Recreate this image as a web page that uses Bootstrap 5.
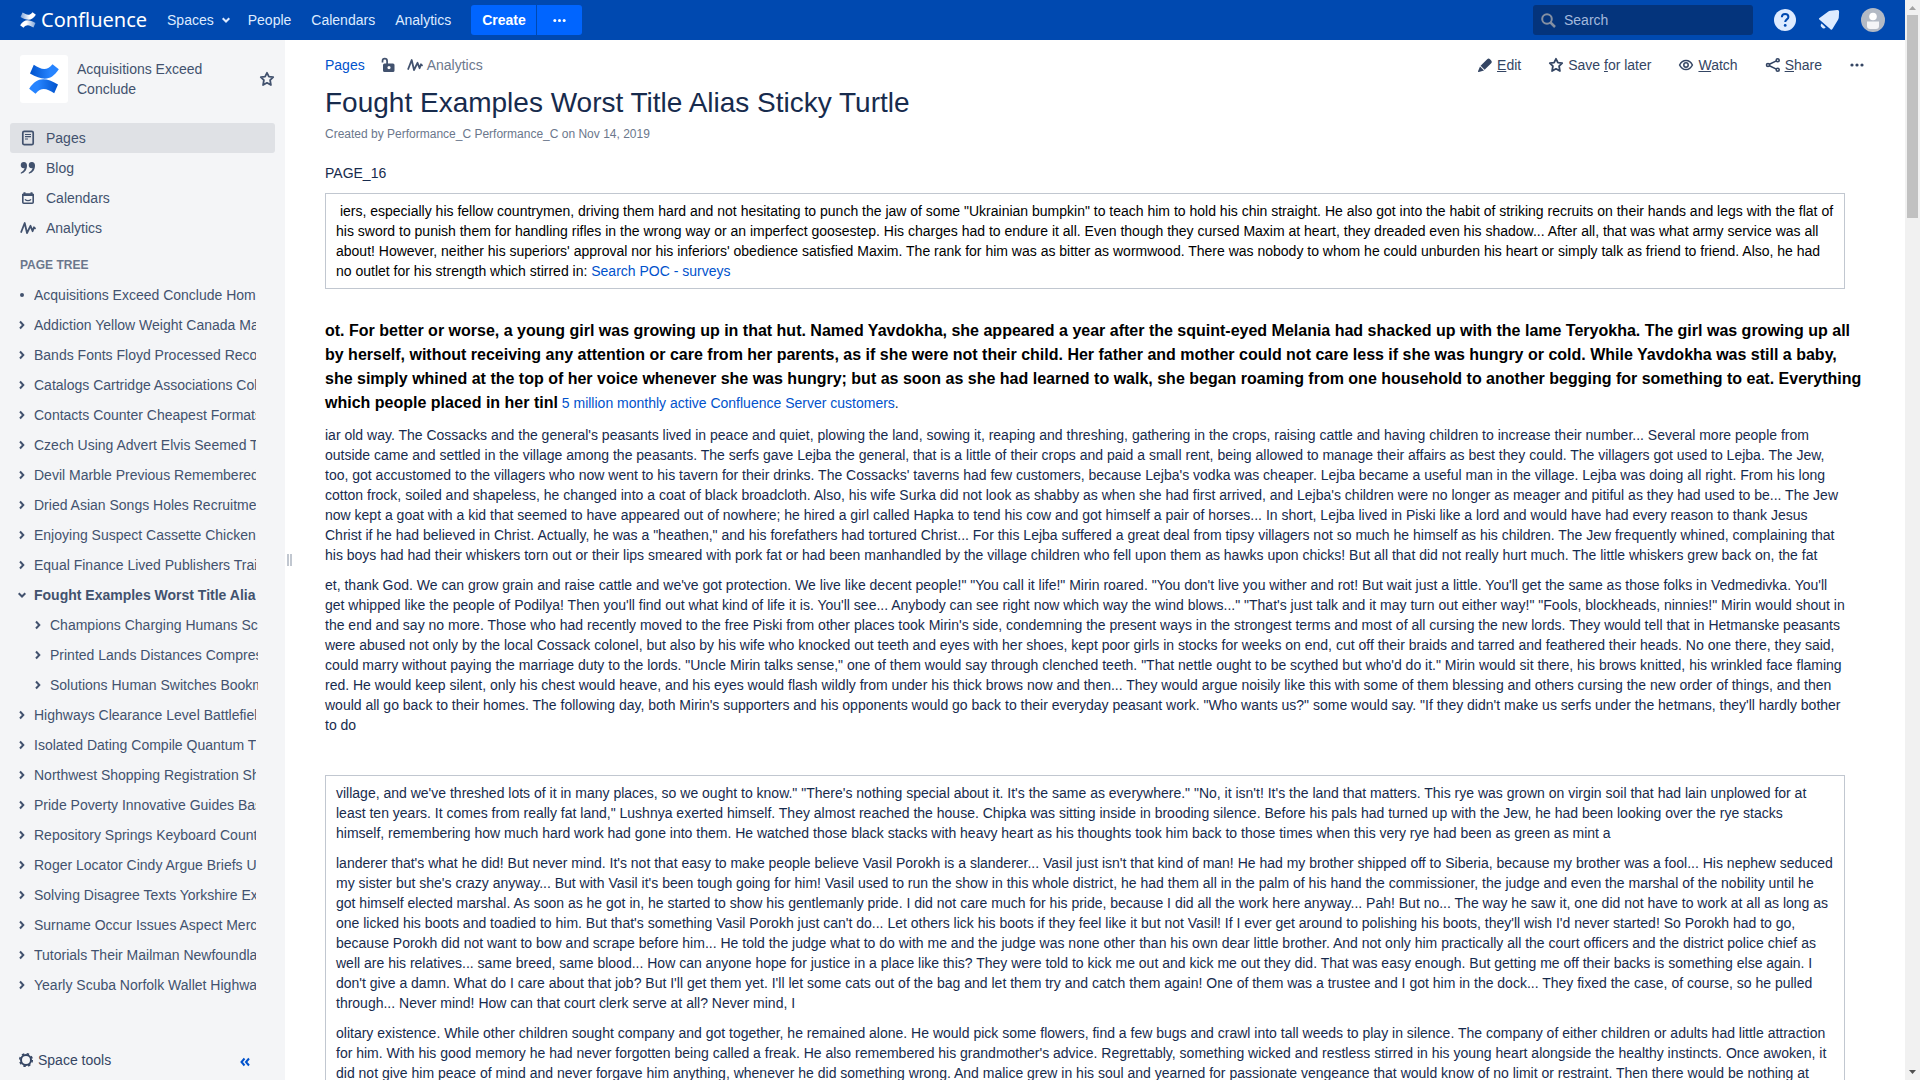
<!DOCTYPE html>
<html lang="en">
<head>
<meta charset="utf-8">
<meta name="viewport" content="width=device-width, initial-scale=1">
<title>Fought Examples Worst Title Alias Sticky Turtle - Confluence</title>
<link href="https://cdn.jsdelivr.net/npm/bootstrap@5.3.0/dist/css/bootstrap.min.css" rel="stylesheet">
<style>
body{font-family:"Liberation Sans",Arial,sans-serif;font-size:14px;line-height:20px;color:#172b4d;background:#fff}
a{color:#0052cc;text-decoration:none}
svg{display:block;flex:none}
.topbar{height:40px;background:#0049b0;padding:0 20px;color:#deebff}
.topbar .nav{gap:20px}
.topbar .nav-link{color:#deebff;padding:0;line-height:20px}
.drop-link{gap:8px;margin-right:-2px}
.brand-link{gap:5px;margin-right:20px}
.brand-name{font-family:"Noto Sans",sans-serif;font-size:20px;line-height:28px;color:#fff}
.btn-create{background:#0065ff;color:#fff;border:0;border-radius:3px;height:30px;font-size:14px;line-height:20px;padding:0 11px;font-weight:700}
.btn-create:hover{background:#2684ff;color:#fff}
.btn-more{border-left:1px solid #0049b0;padding:0 15px}
.search-box{width:220px;height:30px;background:#04347c;border-radius:3px;padding:0 8px}
.search-box input{background:transparent;border:0;outline:0;color:#deebff;font-size:14px;line-height:20px;min-width:0}
.search-box input::placeholder{color:#a3b9dc;opacity:1}
.user-tools{gap:20px;margin-left:20px}
.icon-btn{background:none;border:0;padding:0;color:inherit}
.space-side{width:285px;background:#f4f5f7;color:#42526e}
.space-side a{color:#42526e}
.space-head{padding:15px 10px 20px 20px}
.space-name{margin-left:9px}
.space-logo{width:48px;height:48px;background:#fff;border-radius:3px}
.side-nav{padding:0 10px}
.side-link{height:30px;border-radius:3px;padding:0 10px;gap:10px}
.side-link.current{background:#dfe1e5}
.tree-wrap{padding:12px 0 0 18px}
.tree-head{font-size:12px;line-height:20px;font-weight:700;color:#6b778c;margin:0 0 5px 2px}
.tree a{height:30px;gap:8px}
.tree span{overflow:hidden;white-space:nowrap;width:222px}
.tree ul{padding-left:16px}
.tree ul span{width:208px}
.side-foot{padding:0 35px 10px 18px;color:#344563}
.grip{width:5px;height:12px;border:solid #c1c7d0;border-width:0 2px;left:287px;top:514px}
.wiki-main{padding:15px 60px 0 40px}
.crumb-muted{color:#6b778c;gap:4px}
.page-title{font-size:28px;line-height:32px;font-weight:400;color:#172b4d;margin:12px 0 5px}
.byline{font-size:12px;line-height:20px;color:#6b778c;margin:0 0 19px}
.action-bar{margin:-5px -30px -5px 0;gap:7px}
.action-bar button{background:none;border:0;padding:0 10px;height:30px;color:#344563;gap:4px}
.wiki-body p{margin:0 0 10px}
.wiki-cell{border:1px solid #c1c7d0;padding:7px 10px}
.wiki-cell p:last-child{margin:0}
.before-box{margin-top:40px}
.wiki-body .big-text{line-height:24px;margin:30px -20px 10px 0}
.big-text strong{font-size:16px;color:#000}
.scroll-rail{width:15px;background:#f1f1f1;padding:5px 0}
.scroll-thumb{width:11px;height:19%;background:#c1c1c1;margin-top:4px}
</style>
</head>
<body class="d-flex vh-100 overflow-hidden">
<svg class="d-none" aria-hidden="true">
<symbol id="chev" viewBox="0 0 8 10"><path d="M2 1.500 5.300 5 2 8.500" fill="none" stroke="currentColor" stroke-width="2"/></symbol>
<symbol id="chev-down" viewBox="0 0 8 8"><path d="M.700 2.200 4 5.500l3.300-3.300" fill="none" stroke="currentColor" stroke-width="2"/></symbol>
<symbol id="pulse" viewBox="0 0 16 16"><path d="M1.200 12 4.700 3l2.300 10 3.500-7.200 2.100 5.400L14 7.300l1 1" fill="none" stroke="currentColor" stroke-width="1.800" stroke-linejoin="round" stroke-linecap="round"/></symbol>
<symbol id="star" viewBox="0 0 16 16"><path d="M8 1.800 9.900 5.700l4.300.5-3.100 3 .8 4.800L8 11.800l-3.900 2.200.8-4.800-3.100-3 4.300-.5z" fill="none" stroke="currentColor" stroke-width="1.800" stroke-linejoin="round"/></symbol>
<symbol id="dots" viewBox="0 0 16 16"><g fill="currentColor"><circle cx="3" cy="8" r="1.600"/><circle cx="8" cy="8" r="1.600"/><circle cx="13" cy="8" r="1.600"/></g></symbol>
</svg>
<div class="d-flex flex-column flex-grow-1 overflow-hidden">
<header class="topbar d-flex align-items-center flex-shrink-0">
  <a href="#" class="brand-link d-flex align-items-center" aria-label="Confluence home">
    <svg width="16" height="16" viewBox="0 0 30 30"><defs><linearGradient id="lw" x1="0" x2="1"><stop offset="0" stop-color="#fff" stop-opacity=".5"/><stop offset=".6" stop-color="#fff"/></linearGradient></defs><path d="M4.800.8C12 5 17 8 23.500.3L29.800 5.300C22 17 14 17 1 9.500z" fill="url(#lw)"/><path transform="rotate(180 15 15)" d="M4.800.8C12 5 17 8 23.500.3L29.800 5.300C22 17 14 17 1 9.500z" fill="url(#lw)"/></svg>
    <span class="brand-name">Confluence</span>
  </a>
  <nav class="nav align-items-center">
    <a class="nav-link drop-link d-flex align-items-center" href="#">Spaces<svg width="8" height="8"><use href="#chev-down"/></svg></a>
    <a class="nav-link" href="#">People</a>
    <a class="nav-link" href="#">Calendars</a>
    <a class="nav-link" href="#">Analytics</a>
  </nav>
  <div class="btn-group ms-3 ps-1">
    <button type="button" class="btn btn-create">Create</button>
    <button type="button" class="btn btn-create btn-more d-flex align-items-center" aria-label="Create from template"><svg width="15" height="15"><use href="#dots"/></svg></button>
  </div>
  <form class="search-box d-flex align-items-center ms-auto" role="search">
    <svg width="15" height="15" viewBox="0 0 15 15" fill="none" stroke="#8590a2"><circle cx="6" cy="6" r="4.800" stroke-width="2"/><path d="m9.500 9.500 4.500 4.500" stroke-width="2.500"/></svg>
    <input class="flex-grow-1 ms-2 p-0" type="text" placeholder="Search" aria-label="Search">
  </form>
  <div class="user-tools d-flex align-items-center">
    <button class="icon-btn" aria-label="Help"><svg width="24" height="24" viewBox="0 0 24 24"><circle cx="12" cy="12" r="11" fill="#deebff"/><path d="M8.800 9.300C8.900 7.200 10.200 6 12.100 6c1.900 0 3.300 1.200 3.300 2.900 0 2.400-3.200 2.600-3.200 5.200" fill="none" stroke="#0049b0" stroke-width="2"/><circle cx="12.200" cy="17.400" r="1.400" fill="#0049b0"/></svg></button>
    <button class="icon-btn" aria-label="Notifications"><svg width="24" height="24" viewBox="0 0 24 24" fill="#deebff"><path d="M20.300 2c1.300-.1 1.900.7 1.800 2l-.3 5.500c-.1 1-.4 1.600-.9 2.400l-5.500 9.200c-.6.900-1.300.9-1.900.2L2.300 11.400c-.6-.6-.4-1.100.2-1.500L11 3.800c.8-.6 1.500-.9 2.400-1z"/><path d="M4.600 15.400 8.700 19.500a2.700 2.700 0 0 1-4-.2 2.800 2.800 0 0 1-.1-3.900z"/></svg></button>
    <button class="icon-btn" aria-label="Your account"><svg width="24" height="24" viewBox="0 0 24 24"><circle cx="12" cy="12" r="12" fill="#b3bac5"/><circle cx="12" cy="8.500" r="3.800" fill="#fff"/><path d="M6 13.500h12V18a3 3 0 0 1-3 3H9a3 3 0 0 1-3-3z" fill="#f4f5f7"/></svg></button>
  </div>
</header>
<div class="d-flex flex-grow-1 overflow-hidden position-relative">
<aside class="space-side d-flex flex-column flex-shrink-0 overflow-hidden">
  <div class="space-head d-flex align-items-center">
    <div class="space-logo d-flex align-items-center justify-content-center flex-shrink-0"><svg width="30" height="30" viewBox="0 0 30 30"><defs><linearGradient id="lb" x1="0" x2="1"><stop offset="0" stop-color="#0052cc"/><stop offset=".7" stop-color="#2684ff"/></linearGradient></defs><path d="M4.800.8C12 5 17 8 23.500.3L29.800 5.300C22 17 14 17 1 9.500z" fill="url(#lb)"/><path transform="rotate(180 15 15)" d="M4.800.8C12 5 17 8 23.500.3L29.800 5.300C22 17 14 17 1 9.500z" fill="url(#lb)"/></svg></div>
    <a href="#" class="space-name flex-grow-1 pe-4">Acquisitions Exceed Conclude</a>
    <button class="icon-btn flex-shrink-0" aria-label="Add to my spaces"><svg width="16" height="16"><use href="#star"/></svg></button>
  </div>
  <nav class="side-nav d-flex flex-column">
    <a href="#" class="side-link current d-flex align-items-center"><svg width="16" height="16" viewBox="0 0 16 16" fill="none" stroke="currentColor"><rect x="2.800" y="1.300" width="10.400" height="13.400" rx="1.500" stroke-width="1.700"/><path d="M5 4.500h6M5 6.700h6M5 9h3" stroke-width="1.200"/></svg><span>Pages</span></a>
    <a href="#" class="side-link d-flex align-items-center"><svg width="16" height="16" viewBox="0 0 16 16" fill="currentColor"><path id="qm" d="M4 2a3.100 3.100 0 0 0-.3 6.200c.3 0 .6 0 .8-.1C4.300 10 3 11.500 1 12.600c-.6.400-.2 1.200.5 1C5 12.500 7 9.500 7 5.500 7 3.200 5.800 2 4 2z"/><use href="#qm" x="8"/></svg><span>Blog</span></a>
    <a href="#" class="side-link d-flex align-items-center"><svg width="16" height="16" viewBox="0 0 16 16" fill="none" stroke="currentColor"><rect x="2.800" y="4" width="10.400" height="9.300" rx="1" stroke-width="1.600"/><path d="M2 5h12M4.500 2.300V5M11.500 2.300V5" stroke-width="2"/><path d="M5 9.300c1.500 1.800 4.500 1.800 6 0" stroke-width="1.300"/></svg><span>Calendars</span></a>
    <a href="#" class="side-link d-flex align-items-center"><svg width="16" height="16"><use href="#pulse"/></svg><span>Analytics</span></a>
  </nav>
  <div class="tree-wrap">
    <h2 class="tree-head">PAGE TREE</h2>
    <ul class="tree list-unstyled mb-0 p-0">
      <li><a href="#" class="d-flex align-items-center"><svg width="8" height="10" viewBox="0 0 8 10"><circle cx="4" cy="5" r="2" fill="currentColor"/></svg><span>Acquisitions Exceed Conclude Hom</span></a></li>
      <li><a href="#" class="d-flex align-items-center"><svg width="8" height="10"><use href="#chev"/></svg><span>Addiction Yellow Weight Canada Ma</span></a></li>
      <li><a href="#" class="d-flex align-items-center"><svg width="8" height="10"><use href="#chev"/></svg><span>Bands Fonts Floyd Processed Reco</span></a></li>
      <li><a href="#" class="d-flex align-items-center"><svg width="8" height="10"><use href="#chev"/></svg><span>Catalogs Cartridge Associations Col</span></a></li>
      <li><a href="#" class="d-flex align-items-center"><svg width="8" height="10"><use href="#chev"/></svg><span>Contacts Counter Cheapest Formats</span></a></li>
      <li><a href="#" class="d-flex align-items-center"><svg width="8" height="10"><use href="#chev"/></svg><span>Czech Using Advert Elvis Seemed T</span></a></li>
      <li><a href="#" class="d-flex align-items-center"><svg width="8" height="10"><use href="#chev"/></svg><span>Devil Marble Previous Remembered</span></a></li>
      <li><a href="#" class="d-flex align-items-center"><svg width="8" height="10"><use href="#chev"/></svg><span>Dried Asian Songs Holes Recruitme</span></a></li>
      <li><a href="#" class="d-flex align-items-center"><svg width="8" height="10"><use href="#chev"/></svg><span>Enjoying Suspect Cassette Chicken</span></a></li>
      <li><a href="#" class="d-flex align-items-center"><svg width="8" height="10"><use href="#chev"/></svg><span>Equal Finance Lived Publishers Trai</span></a></li>
      <li><a href="#" class="d-flex align-items-center fw-bold"><svg width="8" height="8"><use href="#chev-down"/></svg><span>Fought Examples Worst Title Alia</span></a>
        <ul class="list-unstyled">
          <li><a href="#" class="d-flex align-items-center"><svg width="8" height="10"><use href="#chev"/></svg><span>Champions Charging Humans Sc</span></a></li>
          <li><a href="#" class="d-flex align-items-center"><svg width="8" height="10"><use href="#chev"/></svg><span>Printed Lands Distances Compres</span></a></li>
          <li><a href="#" class="d-flex align-items-center"><svg width="8" height="10"><use href="#chev"/></svg><span>Solutions Human Switches Bookm</span></a></li>
        </ul>
      </li>
      <li><a href="#" class="d-flex align-items-center"><svg width="8" height="10"><use href="#chev"/></svg><span>Highways Clearance Level Battlefiel</span></a></li>
      <li><a href="#" class="d-flex align-items-center"><svg width="8" height="10"><use href="#chev"/></svg><span>Isolated Dating Compile Quantum T</span></a></li>
      <li><a href="#" class="d-flex align-items-center"><svg width="8" height="10"><use href="#chev"/></svg><span>Northwest Shopping Registration Sh</span></a></li>
      <li><a href="#" class="d-flex align-items-center"><svg width="8" height="10"><use href="#chev"/></svg><span>Pride Poverty Innovative Guides Bas</span></a></li>
      <li><a href="#" class="d-flex align-items-center"><svg width="8" height="10"><use href="#chev"/></svg><span>Repository Springs Keyboard Count</span></a></li>
      <li><a href="#" class="d-flex align-items-center"><svg width="8" height="10"><use href="#chev"/></svg><span>Roger Locator Cindy Argue Briefs U</span></a></li>
      <li><a href="#" class="d-flex align-items-center"><svg width="8" height="10"><use href="#chev"/></svg><span>Solving Disagree Texts Yorkshire Ex</span></a></li>
      <li><a href="#" class="d-flex align-items-center"><svg width="8" height="10"><use href="#chev"/></svg><span>Surname Occur Issues Aspect Merc</span></a></li>
      <li><a href="#" class="d-flex align-items-center"><svg width="8" height="10"><use href="#chev"/></svg><span>Tutorials Their Mailman Newfoundla</span></a></li>
      <li><a href="#" class="d-flex align-items-center"><svg width="8" height="10"><use href="#chev"/></svg><span>Yearly Scuba Norfolk Wallet Highwa</span></a></li>
    </ul>
  </div>
  <div class="side-foot d-flex align-items-center justify-content-between mt-auto">
    <button class="icon-btn d-flex align-items-center gap-1"><svg width="16" height="16" viewBox="0 0 16 16" fill="none" stroke="currentColor"><circle cx="8" cy="8" r="5" stroke-width="2"/><circle cx="8" cy="8" r="6.300" stroke-width="1.500" stroke-dasharray="2.470 2.470"/></svg><span>Space tools</span></button>
    <button class="icon-btn mt-1" aria-label="Collapse sidebar"><svg width="10" height="10" viewBox="0 0 10 10" fill="none" stroke="#0052cc" stroke-width="2"><path d="M4.500 1.500 1.500 5l3 3.500M9 1.500 6 5l3 3.500"/></svg></button>
  </div>
</aside>
<div class="grip position-absolute"></div>
<main class="wiki-main flex-grow-1 overflow-hidden">
  <div class="d-flex justify-content-between align-items-center">
    <div class="d-flex align-items-center">
      <a href="#">Pages</a>
      <button class="icon-btn ms-3" aria-label="Restrictions"><svg width="14" height="16" viewBox="0 0 14 16"><path d="M1.500 5.500V4a2.300 2.300 0 0 1 4.600 0v3" fill="none" stroke="#42526e" stroke-width="1.700"/><path fill="#42526e" fill-rule="evenodd" d="M3.500 6.500h8.500a1.500 1.500 0 0 1 1.500 1.500v5.500A1.500 1.500 0 0 1 12 15H3.500A1.500 1.500 0 0 1 2 13.500V8a1.500 1.500 0 0 1 1.500-1.500zM8 9a1.600 1.600 0 1 0 0 3.200A1.600 1.600 0 0 0 8 9z"/></svg></button>
      <a href="#" class="crumb-muted d-flex align-items-center ms-2 ps-1"><svg width="16" height="16" color="#42526e"><use href="#pulse"/></svg>Analytics</a>
    </div>
    <div class="action-bar d-flex align-items-center">
      <button class="d-flex align-items-center"><svg width="16" height="16" viewBox="0 0 16 16" fill="currentColor"><path d="M10.200 2.200a2 2 0 0 1 2.800 0l1.200 1.200a2 2 0 0 1 0 2.800L7.600 12.800 3.600 8.800zM3 9.400 7 13.400 1.800 15q-1 .2-.8-.8z"/></svg><span><u>E</u>dit</span></button>
      <button class="d-flex align-items-center"><svg width="16" height="16"><use href="#star"/></svg><span>Save <u>f</u>or later</span></button>
      <button class="d-flex align-items-center"><svg width="16" height="16" viewBox="0 0 16 16" fill="none" stroke="currentColor" stroke-width="1.500"><path d="M1.600 8C4.500 1.900 11.500 1.900 14.400 8 11.500 14.100 4.500 14.100 1.600 8z"/><circle cx="8" cy="8" r="2.200"/></svg><span><u>W</u>atch</span></button>
      <button class="d-flex align-items-center"><svg width="16" height="16" viewBox="0 0 16 16" fill="none" stroke="currentColor" stroke-width="1.600"><circle cx="3" cy="8" r="1.500"/><circle cx="12.700" cy="3.300" r="1.500"/><circle cx="12.700" cy="12.700" r="1.500"/><path d="m4.400 7.300 7-3.400M4.400 8.700l7 3.400"/></svg><span><u>S</u>hare</span></button>
      <button class="d-flex align-items-center" aria-label="More options"><svg width="16" height="16"><use href="#dots"/></svg></button>
    </div>
  </div>
  <h1 class="page-title">Fought Examples Worst Title Alias Sticky Turtle</h1>
  <p class="byline">Created by Performance_C Performance_C on Nov 14, 2019</p>
  <div class="wiki-body">
    <p>PAGE_16</p>
    <div class="wiki-cell text-black">&nbsp;iers, especially his fellow countrymen, driving them hard and not hesitating to punch the jaw of some "Ukrainian bumpkin" to teach him to hold his chin straight. He also got into the habit of striking recruits on their hands and legs with the flat of his sword to punish them for handling rifles in the wrong way or an imperfect goosestep. His charges had to endure it all. Even though they cursed Maxim at heart, they dreaded even his shadow... After all, that was what army service was all about! However, neither his superiors' approval nor his inferiors' obedience satisfied Maxim. The rank for him was as bitter as wormwood. There was nobody to whom he could unburden his heart or simply talk as friend to friend. Also, he had no outlet for his strength which stirred in: <a href="#">Search POC - surveys</a></div>
    <p class="big-text"><strong>ot. For better or worse, a young girl was growing up in that hut. Named Yavdokha, she appeared a year after the squint-eyed Melania had shacked up with the lame Teryokha. The girl was growing up all<br>by herself, without receiving any attention or care from her parents, as if she were not their child. Her father and mother could not care less if she was hungry or cold. While Yavdokha was still a baby,<br>she simply whined at the top of her voice whenever she was hungry; but as soon as she had learned to walk, she began roaming from one household to another begging for something to eat. Everything<br>which people placed in her tinl</strong> <a href="#">5 million monthly active Confluence Server customers</a>.</p>
    <p>iar old way. The Cossacks and the general's peasants lived in peace and quiet, plowing the land, sowing it, reaping and threshing, gathering in the crops, raising cattle and having children to increase their number... Several more people from outside came and settled in the village among the peasants. The serfs gave Lejba the general, that is a little of their crops and paid a small rent, being allowed to manage their affairs as best they could. The villagers got used to Lejba. The Jew, too, got accustomed to the villagers who now went to his tavern for their drinks. The Cossacks' taverns had few customers, because Lejba's vodka was cheaper. Lejba became a useful man in the village. Lejba was doing all right. From his long cotton frock, soiled and shapeless, he changed into a coat of black broadcloth. Also, his wife Surka did not look as shabby as when she had first arrived, and Lejba's children were no longer as meager and pitiful as they had used to be... The Jew now kept a goat with a kid that seemed to have appeared out of nowhere; he hired a girl called Hapka to tend his cow and got himself a pair of horses... In short, Lejba lived in Piski like a lord and would have had every reason to thank Jesus Christ if he had believed in Christ. Actually, he was a "heathen," and his forefathers had tortured Christ... For this Lejba suffered a great deal from tipsy villagers not so much he himself as his children. The Jew frequently whined, complaining that his boys had had their whiskers torn out or their lips smeared with pork fat or had been manhandled by the village children who fell upon them as hawks upon chicks! But all that did not really hurt much. The little whiskers grew back on, the fat</p>
    <p>et, thank God. We can grow grain and raise cattle and we've got protection. We live like decent people!" "You call it life!" Mirin roared. "You don't live you wither and rot! But wait just a little. You'll get the same as those folks in Vedmedivka. You'll get whipped like the people of Podilya! Then you'll find out what kind of life it is. You'll see... Anybody can see right now which way the wind blows..." "That's just talk and it may turn out either way!" "Fools, blockheads, ninnies!" Mirin would shout in the end and say no more. Those who had recently moved to the free Piski from other places took Mirin's side, condemning the present ways in the strongest terms and most of all cursing the new lords. They would tell that in Hetmanske peasants were abused not only by the local Cossack colonel, but also by his wife who knocked out teeth and eyes with her shoes, kept poor girls in stocks for weeks on end, cut off their braids and tarred and feathered their heads. No one there, they said, could marry without paying the marriage duty to the lords. "Uncle Mirin talks sense," one of them would say through clenched teeth. "That nettle ought to be scythed but who'd do it." Mirin would sit there, his brows knitted, his wrinkled face flaming red. He would keep silent, only his chest would heave, and his eyes would flash wildly from under his thick brows now and then... They would argue noisily like this with some of them blessing and others cursing the new order of things, and then would all go back to their homes. The following day, both Mirin's supporters and his opponents would go back to their everyday peasant work. "Who wants us?" some would say. "If they didn't make us serfs under the hetmans, they'll hardly bother to do</p>
    <div class="wiki-cell before-box">
      <p>village, and we've threshed lots of it in many places, so we ought to know." "There's nothing special about it. It's the same as everywhere." "No, it isn't! It's the land that matters. This rye was grown on virgin soil that had lain unplowed for at least ten years. It comes from really fat land," Lushnya exerted himself. They almost reached the house. Chipka was sitting inside in brooding silence. Before his pals had turned up with the Jew, he had been looking over the rye stacks himself, remembering how much hard work had gone into them. He watched those black stacks with heavy heart as his thoughts took him back to those times when this very rye had been as green as mint a</p>
      <p>landerer that's what he did! But never mind. It's not that easy to make people believe Vasil Porokh is a slanderer... Vasil just isn't that kind of man! He had my brother shipped off to Siberia, because my brother was a fool... His nephew seduced my sister but she's crazy anyway... But with Vasil it's been tough going for him! Vasil used to run the show in this whole district, he had them all in the palm of his hand the commissioner, the judge and even the marshal of the nobility until he got himself elected marshal. As soon as he got in, he started to show his gentlemanly pride. I did not care much for his pride, because I did all the work here anyway... Pah! But no... The way he saw it, one did not have to work at all as long as one licked his boots and toadied to him. But that's something Vasil Porokh just can't do... Let others lick his boots if they feel like it but not Vasil! If I ever get around to polishing his boots, they'll wish I'd never started! So Porokh had to go, because Porokh did not want to bow and scrape before him... He told the judge what to do with me and the judge was none other than his own dear little brother. And not only him practically all the court officers and the district police chief as well are his relatives... same breed, same blood... How can anyone hope for justice in a place like this? They were told to kick me out and kick me out they did. That was easy enough. But getting me off their backs is something else again. I don't give a damn. What do I care about that job? But I'll get them yet. I'll let some cats out of the bag and let them try and catch them again! One of them was a trustee and I got him in the dock... They fixed the case, of course, so he pulled through... Never mind! How can that court clerk serve at all? Never mind, I</p>
      <p>olitary existence. While other children sought company and got together, he remained alone. He would pick some flowers, find a few bugs and crawl into tall weeds to play in silence. The company of either children or adults had little attraction for him. With his good memory he had never forgotten being called a freak. He also remembered his grandmother's advice. Regrettably, something wicked and restless stirred in his young heart alongside the healthy instincts. Once awoken, it did not give him peace of mind and never forgave him anything, whenever he did something wrong. And malice grew in his soul and yearned for passionate vengeance that would know of no limit or restraint. Then there would be nothing at</p>
    </div>
  </div>
</main>
</div>
</div>
<div class="scroll-rail flex-shrink-0 d-flex flex-column align-items-center" aria-hidden="true">
  <svg width="7" height="6" viewBox="0 0 7 6"><path d="M0 5h7L3.500 1z" fill="#a3a3a3"/></svg>
  <div class="scroll-thumb"></div>
  <svg class="mt-auto" width="7" height="6" viewBox="0 0 7 6"><path d="M0 1h7L3.500 5z" fill="#505050"/></svg>
</div>
<script src="https://cdn.jsdelivr.net/npm/bootstrap@5.3.0/dist/js/bootstrap.bundle.min.js"></script>
</body>
</html>
